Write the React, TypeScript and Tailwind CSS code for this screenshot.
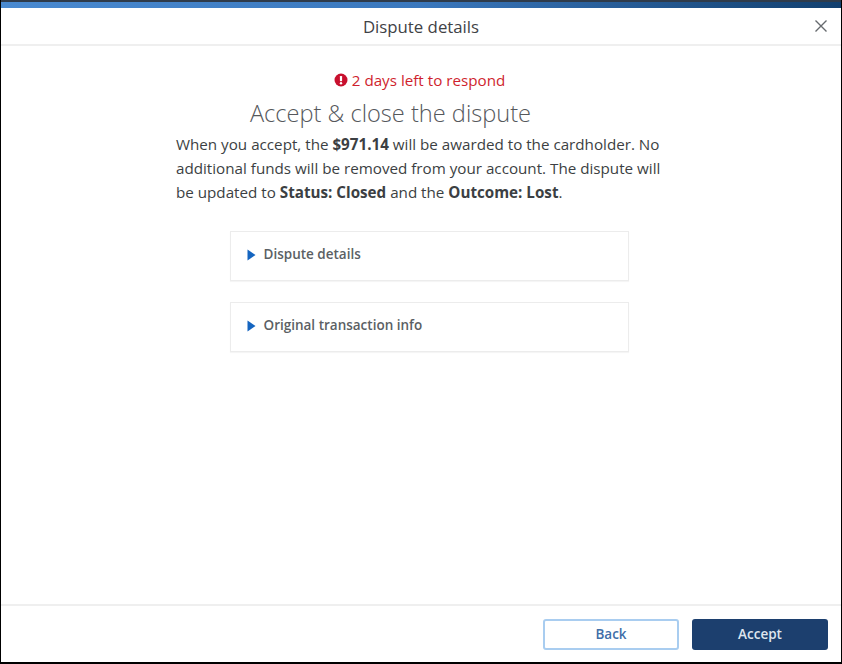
import React from 'react';

const FONT = "font-['Open_Sans',sans-serif]";

function Section({ title }: { title: string }) {
  return (
    <div className="flex h-[50px] w-[399px] items-center border border-[#ececec] pb-[4px] pl-[16px] shadow-[0_1px_1px_rgba(0,0,0,0.04)]">
      <svg width="9" height="12" viewBox="0 0 9 12" className="mt-[2px] shrink-0">
        <path d="M0.5 0.5 L8.5 6 L0.5 11.5 Z" fill="#1565c0" />
      </svg>
      <span className="ml-[8px] text-[13.5px] font-semibold text-[#5b5f64]">{title}</span>
    </div>
  );
}

export default function App() {
  return (
    <div className={`${FONT} flex h-[664px] w-[842px] flex-col overflow-hidden border-x border-b-2 border-black bg-white`}>
      <div className="h-[8px] shrink-0 border-t-2 border-[#2f3b4a] bg-gradient-to-r from-[#4a8ad0] via-[#3b78bd] to-[#12406f]" />
      <header className="relative flex h-[38px] shrink-0 items-center justify-center border-b-2 border-[#efefef]">
        <h1 className="mt-[1px] text-[16.8px] text-[#3f4246]">Dispute details</h1>
        <svg width="14" height="14" viewBox="0 0 14 14" className="absolute right-[13px] top-[11px]">
          <path d="M1.5 1.5 L12.5 12.5 M12.5 1.5 L1.5 12.5" stroke="#666a6e" strokeWidth="1.4" fill="none" />
        </svg>
      </header>

      <main className="flex flex-1 flex-col items-center">
        <div className="mr-[3px] mt-[23px] flex h-[22px] items-center gap-[4px] text-[15.2px] text-[#cf1f2e]">
          <svg width="14" height="14" viewBox="0 0 14 14">
            <circle cx="7" cy="7" r="6.5" fill="#c8102e" />
            <rect x="5.9" y="3" width="2.2" height="5.2" rx="0.6" fill="#fff" />
            <circle cx="7" cy="10.2" r="1.2" fill="#fff" />
          </svg>
          <span>2 days left to respond</span>
        </div>
        <h2 className="mr-[61px] mt-[7px] text-[23.6px] leading-[30px] font-light text-[#55585c]">
          Accept &amp; close the dispute
        </h2>
        <p className="mt-[4px] w-[490px] text-[15.2px] leading-[24px] text-[#3c3f43]">
          When you accept, the <b className="font-bold">$971.14</b> will be awarded to the cardholder. No
          additional funds will be removed from your account. The dispute will be updated to{' '}
          <b className="font-bold">Status: Closed</b> and the <b className="font-bold">Outcome: Lost</b>.
        </p>
        <div className="ml-[16px] mt-[27px] flex flex-col gap-[21px]">
          <Section title="Dispute details" />
          <Section title="Original transaction info" />
        </div>
      </main>

      <footer className="flex h-[58px] shrink-0 items-start justify-end gap-[13px] border-t-2 border-[#efefef] pr-[13px] pt-[13px]">
        <button className="h-[31px] w-[136px] rounded-[3px] border-2 border-[#a9cdf0] bg-white text-[13.5px] font-semibold text-[#3f6ea8]">
          Back
        </button>
        <button className="h-[31px] w-[136px] rounded-[3px] bg-[#1c3f6e] text-[13.5px] font-semibold text-[#dfe6ee]">
          Accept
        </button>
      </footer>
    </div>
  );
}
